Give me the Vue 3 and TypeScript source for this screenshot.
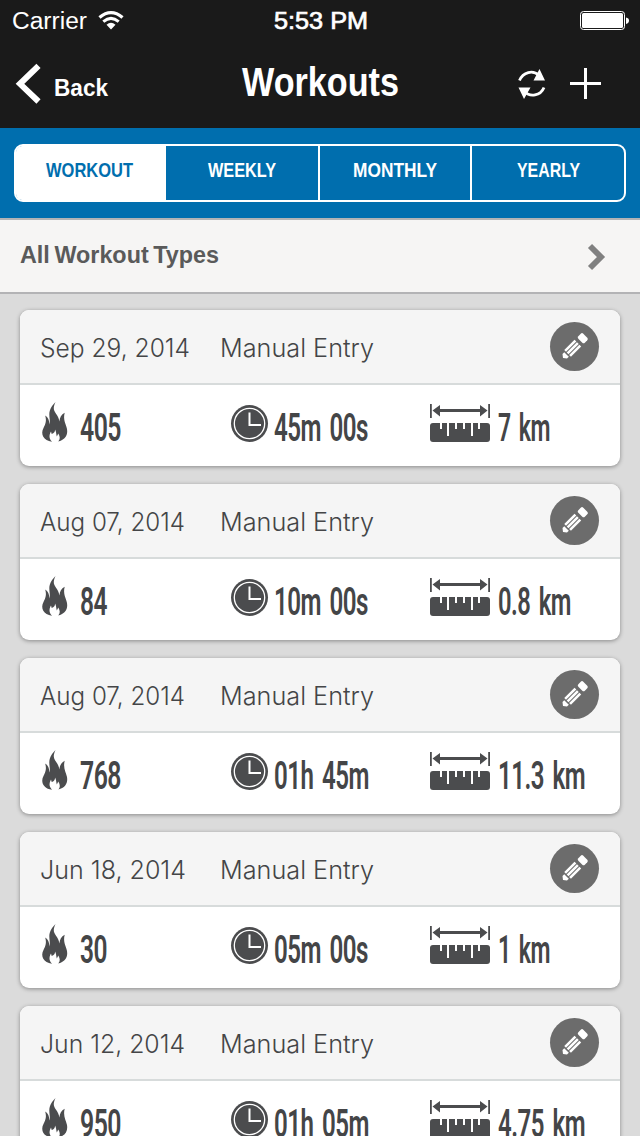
<script setup lang="ts">
import { h } from 'vue'

interface Label { text: string; width: number }
interface Workout { date: Label; calories: Label; time: Label; distance: Label }

// Single-line label condensed to a fixed width; the box's lower edge is the baseline.
const FitText = (props: { text: string; width: number; height: number }) =>
  h('svg', { width: props.width, height: props.height, overflow: 'visible' }, [
    h('text', { x: 0, y: props.height, textLength: props.width, lengthAdjust: 'spacingAndGlyphs', fill: 'currentColor' }, props.text),
  ])
FitText.props = ['text', 'width', 'height']

const tabs: Label[] = [
  { text: 'WORKOUT', width: 87 },
  { text: 'WEEKLY', width: 68 },
  { text: 'MONTHLY', width: 84 },
  { text: 'YEARLY', width: 63 },
]

const workouts: Workout[] = [
  { date: { text: 'Sep 29, 2014', width: 150 }, calories: { text: '405', width: 41 }, time: { text: '45m 00s', width: 94 }, distance: { text: '7 km', width: 52 } },
  { date: { text: 'Aug 07, 2014', width: 145 }, calories: { text: '84', width: 27 }, time: { text: '10m 00s', width: 94 }, distance: { text: '0.8 km', width: 73 } },
  { date: { text: 'Aug 07, 2014', width: 145 }, calories: { text: '768', width: 41 }, time: { text: '01h 45m', width: 95 }, distance: { text: '11.3 km', width: 87 } },
  { date: { text: 'Jun 18, 2014', width: 146 }, calories: { text: '30', width: 27 }, time: { text: '05m 00s', width: 94 }, distance: { text: '1 km', width: 52 } },
  { date: { text: 'Jun 12, 2014', width: 145 }, calories: { text: '950', width: 41 }, time: { text: '01h 05m', width: 95 }, distance: { text: '4.75 km', width: 87 } },
]
</script>

<template>
  <main class="screen">
    <header class="top">
      <div class="status">
        <div class="carrier">
          <FitText class="carrier-name" text="Carrier" :width="75" :height="18" />
          <svg class="wifi" width="26" height="19" viewBox="0 0 26 19">
            <path d="M1.500 6.500Q13-3.200 24.500 6.500" fill="none" stroke="#fff" stroke-width="3.300" />
            <path d="M5.300 10.600Q13 4.200 20.700 10.600" fill="none" stroke="#fff" stroke-width="3" />
            <path d="M8.500 13.800Q13 9.800 17.500 13.800L13 18.500Z" fill="#fff" />
          </svg>
        </div>
        <FitText class="clock-time" text="5:53 PM" :width="94" :height="18" />
        <svg class="battery" width="50" height="20" viewBox="0 0 50 20">
          <rect x=".5" y=".5" width="44" height="18" rx="3" fill="none" stroke="#fff" />
          <rect x="2" y="2" width="41" height="15" rx="1.500" fill="#fff" />
          <path d="M46 6.500Q49 7 49 9.500T46 13Z" fill="#fff" />
        </svg>
      </div>
      <nav class="nav">
        <div class="back">
          <svg width="26" height="42" viewBox="0 0 26 42"><path d="M22.500 2.800L4 20.800L22.500 38.500" fill="none" stroke="#fff" stroke-width="6" /></svg>
          <FitText class="back-label" text="Back" :width="54" :height="17" />
        </div>
        <FitText class="title" text="Workouts" :width="157" :height="29" />
        <div class="actions">
          <svg width="28" height="30" viewBox="0 0 28 30">
            <path d="M1.500 11.500C5 3 15 .5 21 6.500M26 18.500C22.500 27 12 28.500 6.500 22.500" fill="none" stroke="#fff" stroke-width="2.800" />
            <path d="M21.500 0L27 11.500H15.500Z M.5 18.500H12.500L6 30Z" fill="#fff" />
          </svg>
          <svg width="31" height="31" viewBox="0 0 31 31"><path d="M14 0h3v14h14v3H17v14h-3V17H0v-3h14Z" fill="#fff" /></svg>
        </div>
      </nav>
    </header>

    <section class="tab-bar">
      <div class="tabs">
        <div v-for="(tab, i) in tabs" :key="tab.text" class="tab" :class="{ active: i === 0 }">
          <FitText class="tab-label" :text="tab.text" :width="tab.width" :height="15" />
        </div>
      </div>
    </section>

    <section class="filter">
      <FitText class="filter-label" text="All Workout Types" :width="199" :height="18" />
      <svg width="20" height="28" viewBox="0 0 20 28"><path d="M3 3L14 14L3 25" fill="none" stroke="#808080" stroke-width="5.800" /></svg>
    </section>

    <section class="list">
      <article v-for="(w, i) in workouts" :key="i" class="card">
        <div class="card-head">
          <FitText class="entry" :text="w.date.text" :width="w.date.width" :height="19" />
          <FitText class="entry" text="Manual Entry" :width="154" :height="19" />
          <svg class="edit" width="50" height="50" viewBox="0 0 50 50">
            <circle cx="24.500" cy="24.500" r="24.500" fill="#6c6c6c" />
            <g transform="translate(13 36) rotate(-45)" fill="#fff">
              <path d="M0 0L2.500-3.200H5V3.200H2.500Z" />
              <rect x="6.500" y="-4.700" width="14.500" height="2.500" />
              <rect x="6.500" y="-1.250" width="14.500" height="2.500" />
              <rect x="6.500" y="2.200" width="14.500" height="2.500" />
              <rect x="24.500" y="-4.600" width="7" height="9.200" rx="1.800" />
            </g>
          </svg>
        </div>
        <div class="stats">
          <div class="stat">
            <svg class="flame" width="26" height="40" viewBox="0 0 26 40">
              <path d="M13.500 0C10.500 3 7.500 7 7.300 12C7.200 16 8.500 19 7.500 22.500C7.300 18 6 15 3.200 13.500C4.800 19 3.500 22 1.500 26C-1.800 32 1.500 38.500 10 39.700C6.800 36.500 7 33 9 29.500L9.700 32C12 31.500 13.300 29.500 13 27.500C14.200 29.500 14.200 32 14.800 34.500L16.300 31.500C18 34.500 18.500 37 16.300 39.500C23.500 37.500 26 33 25 27C24 22 20.800 18 22.700 10.800C19.300 12.500 17.700 15.500 17.400 19.500C16.500 12.500 11.300 10.500 11.800 5.500C12 4 12.500 2 13.500 0Z" fill="#4b4c4e" />
            </svg>
            <FitText class="value" :text="w.calories.text" :width="w.calories.width" :height="28" />
          </div>
          <div class="stat">
            <svg class="clock" width="37" height="38" viewBox="0 0 37 38">
              <circle cx="18.500" cy="18.500" r="18.500" fill="#4b4c4e" />
              <circle cx="18.500" cy="18.500" r="15.200" fill="none" stroke="#fff" stroke-width="1.300" />
              <path d="M18.500 7.500V20H30" fill="none" stroke="#fff" stroke-width="2" />
            </svg>
            <FitText class="value" :text="w.time.text" :width="w.time.width" :height="28" />
          </div>
          <div class="stat">
            <svg class="ruler" width="60" height="38" viewBox="0 0 60 38" fill="#4b4c4e">
              <path d="M0 0h1.800v14H0ZM58.200 0H60v14h-1.800ZM2.500 6.500L10 1v4h40V1l7.500 5.500L50 12.500V8H10v4.500Z" />
              <rect y="19" width="60" height="19" rx="3" />
              <path d="M10 19h2v6h-2ZM17 19h2v13h-2ZM25 19h2v6h-2ZM33 19h2v6h-2ZM41 19h2v13h-2ZM48 19h2v6h-2Z" fill="#fff" />
            </svg>
            <FitText class="value" :text="w.distance.text" :width="w.distance.width" :height="28" />
          </div>
        </div>
      </article>
    </section>
  </main>
</template>

<style>
body { margin: 0; }
</style>

<style scoped>
.screen { width: 640px; height: 1136px; overflow: hidden; background: #dbdbdb; font-family: "Liberation Sans", Arial, sans-serif; display: flex; flex-direction: column; }
svg { display: block; flex: none; overflow: visible; }
.top { height: 128px; flex: none; background: #1a1a1a; color: #fff; }
.status { height: 42px; display: grid; grid-template-columns: 1fr auto 1fr; box-sizing: border-box; padding: 11px 10px 0 12px; font-size: 23.500px; }
.carrier { display: flex; gap: 11px; }
.clock-time { font-size: 23.500px; stroke: #fff; stroke-width: .7px; }
.battery { justify-self: end; }
.nav { height: 86px; display: grid; grid-template-columns: 225px 1fr 125px; }
.back { display: flex; padding: 21px 0 0 16px; gap: 12px; }
.back-label { margin-top: 16px; font-weight: 700; font-size: 24px; }
.title { margin: 25px 0 0 17px; font-weight: 700; font-size: 41px; }
.actions { display: flex; gap: 24px; padding: 27px 0 0 3px; }
.actions svg:last-child { margin-top: -1px; }
.tab-bar { height: 92px; flex: none; box-sizing: border-box; padding: 16px 14px 0; background: #006eae; border-bottom: 2px solid #b3b3b5; }
.tabs { height: 58px; box-sizing: border-box; border: 2px solid #fff; border-radius: 9px; display: grid; grid-template-columns: 148px 154px 152px 1fr; color: #fff; }
.tab { display: flex; justify-content: center; padding-top: 16px; border-left: 2px solid #fff; }
.tab:first-child { border-left: 0; padding-right: 2px; }
.active { background: #fff; color: #006eae; border-radius: 6px 0 0 6px; }
.tab-label { font-weight: 700; font-size: 21px; }
.filter { height: 74px; flex: none; box-sizing: border-box; border-bottom: 2px solid #b3b3b5; background: #f6f5f4; color: #5a5a5a; padding: 0 33px 0 20px; display: flex; justify-content: space-between; align-items: flex-start; }
.filter-label { margin-top: 25px; font-weight: 700; font-size: 24.500px; word-spacing: -2px; }
.filter > svg:last-child { margin-top: 23px; }
.list { display: flex; flex-direction: column; gap: 18px; padding: 16px 20px 0; }
.card { height: 156px; flex: none; background: #fff; border-radius: 9px; box-shadow: 0 1px 4px rgba(0, 0, 0, .38); color: #444547; }
.card-head { height: 75px; box-sizing: border-box; border-bottom: 2px solid #d7dbdb; border-radius: 9px 9px 0 0; background: #f5f5f5; padding: 0 20px; display: grid; grid-template-columns: 180px 330px 50px; }
.entry { margin-top: 28px; font-family: "Inter", sans-serif; font-weight: 300; font-size: 25.500px; }
.edit { margin-top: 12px; }
.stats { display: grid; grid-template-columns: 190px 200px 1fr; padding: 17px 20px 0; }
.stat { display: flex; }
.flame { margin-left: 2px; }
.clock { margin-left: 1px; margin-top: 3px; }
.ruler { margin-top: 2px; }
.value { margin: 11px 0 0 12px; font-family: "Roboto", sans-serif; font-weight: 600; font-size: 39.500px; letter-spacing: -.8px; word-spacing: 5px; }
.clock + .value { margin-left: 6px; }
.ruler + .value { margin-left: 8px; }
</style>
